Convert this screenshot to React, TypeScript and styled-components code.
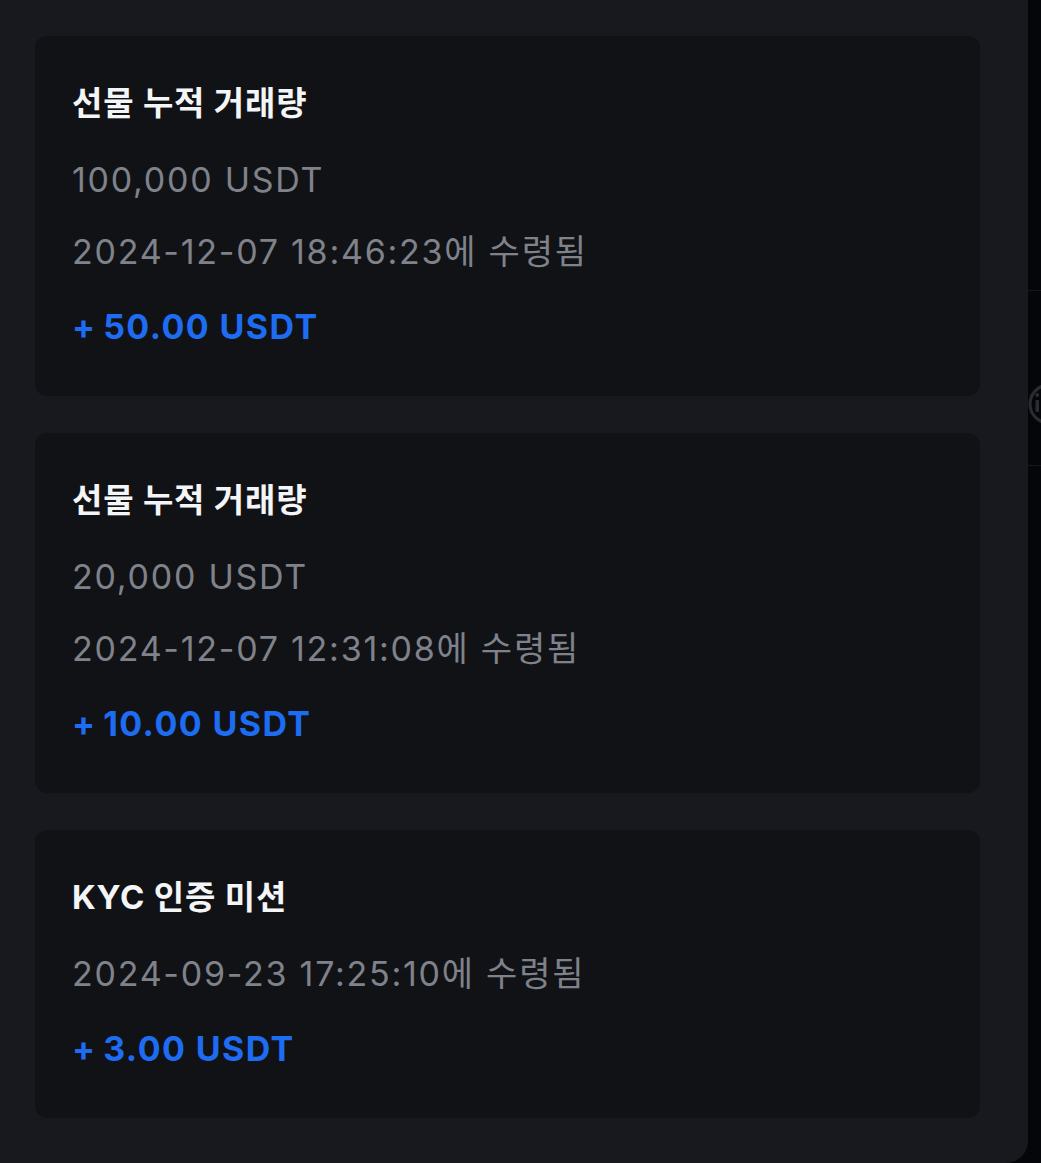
import styled, { createGlobalStyle } from "styled-components";

const GlobalStyle = createGlobalStyle`
  html, body {
    margin: 0;
    padding: 0;
    background: #05060a;
  }
  * {
    box-sizing: border-box;
  }
`;

const Screen = styled.div`
  display: flex;
  width: 1041px;
  height: 1163px;
  overflow: hidden;
  font-family: "Inter", "Noto Sans CJK KR", sans-serif;
`;

const Sheet = styled.div`
  flex: 0 0 1028px;
  height: 100%;
  padding: 36px 48px 0 35px;
  display: flex;
  flex-direction: column;
  gap: 37px;
  background: #18191e;
  border-bottom-right-radius: 22px;
`;

const Backdrop = styled.div`
  flex: 1;
  position: relative;
  overflow: hidden;
`;

const Divider = styled.div<{ $top: number }>`
  position: absolute;
  left: 0;
  right: 0;
  top: ${({ $top }) => $top}px;
  height: 1px;
  background: #15171c;
`;

const InfoIcon = styled.svg`
  position: absolute;
  left: -1px;
  top: 382px;
`;

const Card = styled.div`
  display: flex;
  flex-direction: column;
  padding: 47px 37px 49px;
  background: #111216;
  border-radius: 12px;
`;

const Title = styled.div`
  font-size: 33px;
  line-height: 40px;
  font-weight: 700;
  letter-spacing: 0.8px;
  color: #f4f5f7;
  margin-bottom: 37px;
`;

const Meta = styled.div`
  font-size: 34px;
  line-height: 40px;
  font-weight: 400;
  letter-spacing: 1.75px;
  color: #7f828a;
  & + & {
    margin-top: 32px;
  }
`;

const Reward = styled.div`
  margin-top: 35px;
  font-size: 34px;
  line-height: 40px;
  font-weight: 700;
  letter-spacing: 1.4px;
  color: #1d6cf2;
`;

type Mission = {
  title: string;
  target?: string;
  claimedAt: string;
  reward: string;
};

const missions: Mission[] = [
  {
    title: "선물 누적 거래량",
    target: "100,000 USDT",
    claimedAt: "2024-12-07 18:46:23",
    reward: "50.00",
  },
  {
    title: "선물 누적 거래량",
    target: "20,000 USDT",
    claimedAt: "2024-12-07 12:31:08",
    reward: "10.00",
  },
  {
    title: "KYC 인증 미션",
    claimedAt: "2024-09-23 17:25:10",
    reward: "3.00",
  },
];

const App = () => {
  return (
    <>
      <GlobalStyle />
      <Screen>
        <Sheet>
          {missions.map((m, i) => (
            <Card key={i}>
              <Title>{m.title}</Title>
              {m.target && <Meta>{m.target}</Meta>}
              <Meta>{m.claimedAt}에 수령됨</Meta>
              <Reward>+{"\u2009"}{m.reward} USDT</Reward>
            </Card>
          ))}
        </Sheet>
        <Backdrop>
          <Divider $top={290} />
          <Divider $top={465} />
          <InfoIcon width="44" height="44" viewBox="0 0 44 44">
            <circle cx="22" cy="22" r="19" fill="none" stroke="#2a2c31" strokeWidth="3" />
            <rect x="8.5" y="18" width="3.5" height="12" rx="1" fill="#2a2c31" />
            <circle cx="10.2" cy="13" r="2" fill="#2a2c31" />
          </InfoIcon>
        </Backdrop>
      </Screen>
    </>
  );
};

export default App;
